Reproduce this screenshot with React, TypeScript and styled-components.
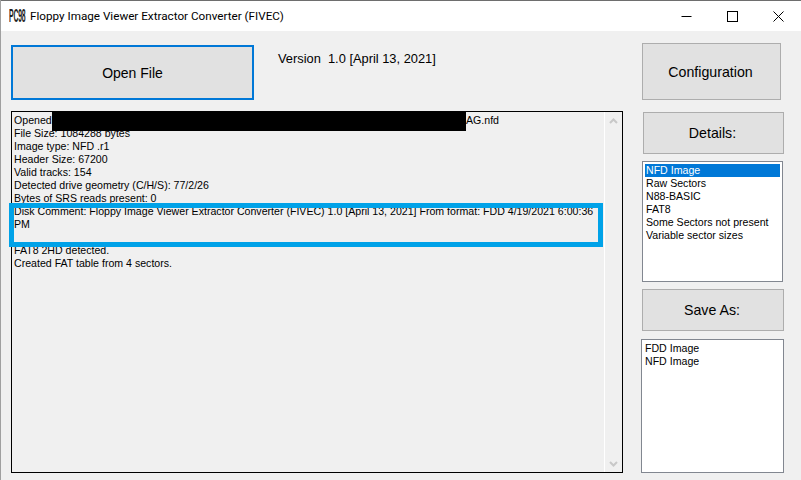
import { VFC } from "react";
import styled, { createGlobalStyle } from "styled-components";

const logLines = [
    "File Size: 1084288 bytes",
    "Image type: NFD .r1",
    "Header Size: 67200",
    "Valid tracks: 154",
    "Detected drive geometry (C/H/S): 77/2/26",
    "Bytes of SRS reads present: 0",
    "Disk Comment: Floppy Image Viewer Extractor Converter (FIVEC) 1.0 [April 13, 2021] From format: FDD 4/19/2021 6:00:36 PM",
    "\u00a0",
    "FAT8 2HD detected.",
    "Created FAT table from 4 sectors.",
];

const detailItems = [
    "NFD Image",
    "Raw Sectors",
    "N88-BASIC",
    "FAT8",
    "Some Sectors not present",
    "Variable sector sizes",
];

const App: VFC = () => {
    return (
        <SWindow>
            <GlobalStyle />
            <STitleBar>
                <SLogo>PC98</SLogo>
                <STitle>Floppy Image Viewer Extractor Converter (FIVEC)</STitle>
                <SCaptionButtons>
                    <SCaptionButton>
                        <svg width="11" height="11" viewBox="0 0 11 11">
                            <path d="M0.5 5.5H10.5" stroke="#000" fill="none" />
                        </svg>
                    </SCaptionButton>
                    <SCaptionButton>
                        <svg width="11" height="11" viewBox="0 0 11 11">
                            <rect x="0.5" y="0.5" width="10" height="10" stroke="#000" fill="none" />
                        </svg>
                    </SCaptionButton>
                    <SCaptionButton>
                        <svg width="11" height="11" viewBox="0 0 11 11">
                            <path d="M0.5 0.5L10.5 10.5M10.5 0.5L0.5 10.5" stroke="#000" fill="none" />
                        </svg>
                    </SCaptionButton>
                </SCaptionButtons>
            </STitleBar>
            <SBody>
                <SLeftColumn>
                    <STopRow>
                        <SOpenButton>Open File</SOpenButton>
                        <SVersion>Version&nbsp; 1.0 [April 13, 2021]</SVersion>
                    </STopRow>
                    <SLogBox>
                        <SLogText>
                            <SOpenedLine>
                                <SOpenedLabel>Opened</SOpenedLabel>
                                <SHiddenName />
                                <span>AG.nfd</span>
                            </SOpenedLine>
                            {logLines.map((line) => (
                                <div key={line}>{line}</div>
                            ))}
                        </SLogText>
                        <SScrollBar>
                            <svg width="9" height="6" viewBox="0 0 9 6">
                                <path d="M1 5L4.5 1.5L8 5" stroke="#c8c8c8" strokeWidth="2" fill="none" />
                            </svg>
                            <svg width="9" height="6" viewBox="0 0 9 6">
                                <path d="M1 1L4.5 4.5L8 1" stroke="#c8c8c8" strokeWidth="2" fill="none" />
                            </svg>
                        </SScrollBar>
                        <SHighlight />
                    </SLogBox>
                </SLeftColumn>
                <SRightColumn>
                    <SSideButton $width={139} $height={57} $top={0} $left={1}>
                        Configuration
                    </SSideButton>
                    <SSideButton $width={141} $height={42} $top={12} $left={2}>
                        Details:
                    </SSideButton>
                    <SListBox $width={141} $height={121} $top={7} $left={1}>
                        {detailItems.map((item, i) => (
                            <SListItem key={item} $selected={i === 0}>
                                {item}
                            </SListItem>
                        ))}
                    </SListBox>
                    <SSideButton $width={142} $height={42} $top={7} $left={1}>
                        Save As:
                    </SSideButton>
                    <SListBox $width={143} $height={134} $top={8} $left={0}>
                        <SListItem>FDD Image</SListItem>
                        <SListItem>NFD Image</SListItem>
                    </SListBox>
                </SRightColumn>
            </SBody>
        </SWindow>
    );
};

export default App;

const GlobalStyle = createGlobalStyle`
    html, body {
        margin: 0;
        padding: 0;
        background: #f0f0f0;
    }
    * {
        box-sizing: border-box;
    }
`;

const SWindow = styled.div`
    width: 801px;
    height: 480px;
    overflow: hidden;
    background: #f0f0f0;
    border-left: 1px solid #a0a0a0;
    font-family: "Liberation Sans", Arial, sans-serif;
    color: #000;
`;

const STitleBar = styled.div`
    display: flex;
    align-items: center;
    height: 31px;
    margin-left: -1px;
    padding-left: 9px;
    background: #fff;
    border-top: 1px solid #6e6e6e;
`;

const SLogo = styled.div`
    width: 16px;
    margin-right: 5px;
    font-family: "Liberation Sans", sans-serif;
    font-weight: 700;
    font-size: 19px;
    letter-spacing: -0.5px;
    white-space: nowrap;
    color: #222;
    transform: scaleX(0.36);
    transform-origin: left center;
`;

const STitle = styled.div`
    font-family: Roboto, sans-serif;
    font-size: 11.7px;
    color: #000;
    white-space: nowrap;
`;

const SCaptionButtons = styled.div`
    display: flex;
    margin-left: auto;
`;

const SCaptionButton = styled.div`
    display: flex;
    align-items: center;
    justify-content: center;
    width: 46px;
    height: 30px;
`;

const SBody = styled.div`
    display: flex;
    height: 449px;
    padding: 12px 0 0 10px;
`;

const SLeftColumn = styled.div`
    display: flex;
    flex-direction: column;
    width: 612px;
`;

const STopRow = styled.div`
    display: flex;
    margin-top: 2px;
`;

const SOpenButton = styled.div`
    display: flex;
    align-items: center;
    justify-content: center;
    width: 243px;
    height: 55px;
    background: #e1e1e1;
    border: 2px solid #0078d7;
    font-size: 14px;
`;

const SVersion = styled.div`
    margin: 6px 0 0 24px;
    font-size: 12.85px;
    line-height: 15px;
    white-space: nowrap;
`;

const SLogBox = styled.div`
    position: relative;
    display: flex;
    width: 612px;
    height: 362px;
    margin-top: 11px;
    background: #f0f0f0;
    border: 1px solid #000;
`;

const SLogText = styled.div`
    flex: 1;
    padding: 2px 4px 0 2px;
    font-size: 10.6px;
    line-height: 13px;
    min-width: 0;
`;

const SOpenedLine = styled.div`
    display: flex;
    height: 13px;
`;

const SOpenedLabel = styled.span`
    width: 38px;
    flex: none;
`;

const SHiddenName = styled.div`
    width: 414px;
    height: 20px;
    margin-top: -3px;
    background: #000;
    flex: none;
`;

const SScrollBar = styled.div`
    display: flex;
    flex-direction: column;
    justify-content: space-between;
    align-items: center;
    width: 18px;
    padding: 6px 0 5px;
    border-left: 1px solid #fff;
`;

const SHighlight = styled.div`
    position: absolute;
    left: -3px;
    top: 91px;
    width: 594px;
    height: 44px;
    border: 5px solid #00a2e8;
    pointer-events: none;
`;

const SRightColumn = styled.div`
    display: flex;
    flex-direction: column;
    margin-left: 18px;
    width: 143px;
`;

const SSideButton = styled.div<{ $width: number; $height: number; $top: number; $left: number }>`
    display: flex;
    align-items: center;
    justify-content: center;
    width: ${(p) => p.$width}px;
    height: ${(p) => p.$height}px;
    margin: ${(p) => p.$top}px 0 0 ${(p) => p.$left}px;
    padding-right: 2px;
    background: #e1e1e1;
    border: 1px solid #adadad;
    font-size: 14.2px;
`;

const SListBox = styled.div<{ $width: number; $height: number; $top: number; $left: number }>`
    width: ${(p) => p.$width}px;
    height: ${(p) => p.$height}px;
    margin: ${(p) => p.$top}px 0 0 ${(p) => p.$left}px;
    padding: 2px;
    background: #fff;
    border: 1px solid #828790;
    font-size: 10.6px;
    line-height: 13px;
`;

const SListItem = styled.div<{ $selected?: boolean }>`
    padding-left: 1px;
    background: ${(p) => (p.$selected ? "#0078d7" : "transparent")};
    color: ${(p) => (p.$selected ? "#fff" : "#000")};
    white-space: nowrap;
`;
